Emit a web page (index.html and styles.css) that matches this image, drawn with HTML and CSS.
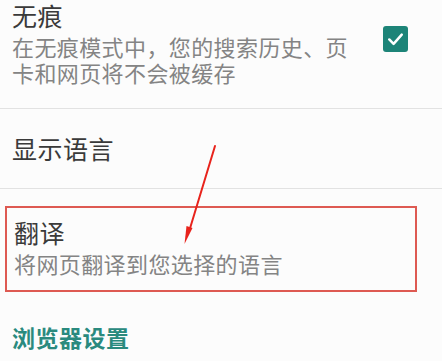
FILE: index.html
```html
<!DOCTYPE html>
<html lang="zh-CN">
<head>
<meta charset="utf-8">
<link rel="stylesheet" href="styles.css">
</head>
<body>
<div class="page">
  <div class="item item-first">
    <div class="text">
      <div class="title">无痕</div>
      <div class="summary">在无痕模式中，您的搜索历史、页卡和网页将不会被缓存</div>
    </div>
    <div class="checkbox">
      <svg viewBox="0 0 26 26" width="26" height="26"><path d="M6.5 13.5 L11 18 L19.5 8.5" fill="none" stroke="#fff" stroke-width="2.6" stroke-linecap="round" stroke-linejoin="round"/></svg>
    </div>
  </div>
  <div class="divider"></div>
  <div class="item item-single">
    <div class="title">显示语言</div>
  </div>
  <div class="divider"></div>
  <div class="item item-boxed">
    <div class="title">翻译</div>
    <div class="summary">将网页翻译到您选择的语言</div>
  </div>
  <div class="category">浏览器设置</div>
  <svg class="arrow" viewBox="0 0 442 361" width="442" height="361">
    <line x1="215" y1="146" x2="189.5" y2="230" stroke="#e8231c" stroke-width="2" stroke-linecap="round"/>
    <polygon points="184.5,244 186.5,226 192.5,228" fill="#e8231c"/>
  </svg>
</div>
</body>
</html>
```

FILE: styles.css
```css
html, body {
  margin: 0;
  padding: 0;
  background: #fcfcfc;
}

.page {
  position: relative;
  width: 442px;
  height: 361px;
  overflow: hidden;
  font-family: "Noto Sans CJK SC", "Noto Sans", sans-serif;
}

.item {
  padding-left: 12px;
}

.item-first {
  display: flex;
  align-items: flex-start;
  justify-content: space-between;
  padding-top: 0;
  padding-bottom: 23px;
  padding-right: 34px;
}

.text {
  width: 345px;
}

.title {
  font-size: 25px;
  line-height: 30px;
  color: #3a3a3a;
  letter-spacing: 0.5px;
}

.summary {
  margin-top: 3px;
  font-size: 22px;
  line-height: 26px;
  color: #848484;
  letter-spacing: 0.4px;
}

.checkbox {
  margin-top: 26px;
  width: 25px;
  height: 26px;
  border-radius: 3px;
  background: #1d8478;
  display: flex;
  align-items: center;
  justify-content: center;
}

.divider {
  height: 1px;
  background: #e2e2e2;
}

.item-single {
  padding-top: 24px;
  padding-bottom: 25px;
}

.item-boxed {
  margin: 17px 0 0 5px;
  width: 401px;
  padding: 9px 0 14px 7px;
  border: 2px solid #de5a52;
}

.category {
  margin-top: 31px;
  padding-left: 12px;
  font-size: 23px;
  line-height: 28px;
  font-weight: bold;
  color: #2a8a7e;
  letter-spacing: 0.5px;
}

.arrow {
  position: absolute;
  left: 0;
  top: 0;
  pointer-events: none;
}
```
